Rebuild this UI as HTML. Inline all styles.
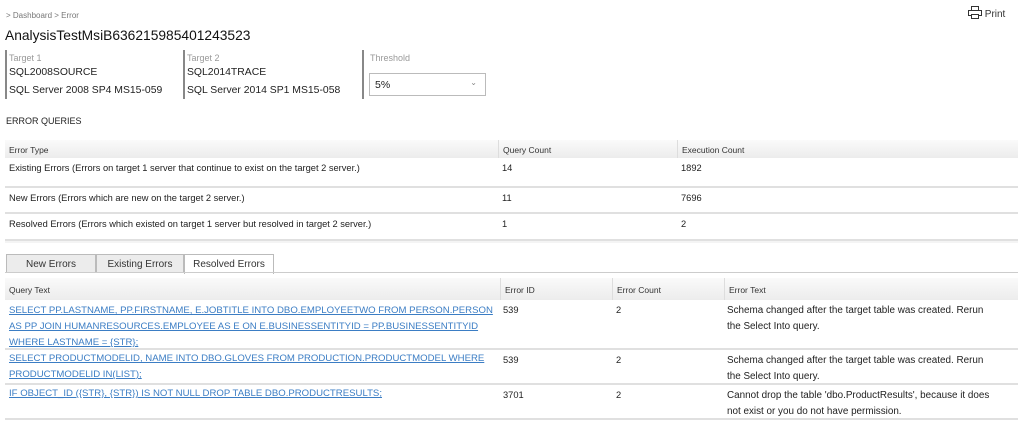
<!DOCTYPE html>
<html><head><meta charset="utf-8"><style>
*{box-sizing:border-box;margin:0;padding:0}
body{width:1024px;height:448px;background:#fff;font-family:"Liberation Sans",sans-serif;color:#222;position:relative;overflow:hidden}
.a{position:absolute;white-space:nowrap}
.crumb{left:6px;top:11px;font-size:8px;color:#777}
.title{left:5px;top:28px;font-size:13.8px;color:#111}
.blk{position:absolute;top:50px;height:49px;border-left:2px solid #888}
.lbl{position:absolute;left:2px;top:3px;font-size:9px;color:#999;white-space:nowrap}
.v{position:absolute;left:2px;font-size:10.4px;color:#222;white-space:nowrap}
.sel{position:absolute;left:5px;top:23px;width:117px;height:23px;border:1px solid #bbb;font-size:10.5px;padding:5px 0 0 5px}
.sec{left:6px;top:116px;font-size:9px;color:#222}
.th{position:absolute;background:linear-gradient(#fafafa,#ececec);font-size:8.5px;color:#333}
.th span{position:absolute;top:0;height:100%;padding:5px 0 0 4px;border-left:1px solid #ddd;white-space:nowrap}
.row{position:absolute;left:5px;width:1013px;border-bottom:2px solid #e0e0e0;font-size:9.3px;color:#222}
.row span{position:absolute;top:5px;white-space:nowrap}
.tab{position:absolute;top:254px;height:19px;border:1px solid #bbb;border-bottom:none;background:#ececec;font-size:10px;text-align:center;padding-top:4px;color:#333}
.lk{color:#3b7dc4;text-decoration:underline;font-size:9.6px;line-height:16px}
.et{font-size:9.9px;line-height:16px}
</style></head><body>
<div class="a crumb">&gt; Dashboard &gt; Error</div>
<div class="a" style="left:968px;top:6px;font-size:10px;color:#333">
<svg width="14" height="13" viewBox="0 0 14 13" style="vertical-align:-2px"><rect x="3.5" y="0.5" width="7" height="4" fill="none" stroke="#333"/><rect x="0.5" y="4.5" width="13" height="5" fill="none" stroke="#333"/><rect x="3.5" y="8.5" width="7" height="4" fill="#fff" stroke="#333"/></svg> Print</div>
<div class="a title">AnalysisTestMsiB636215985401243523</div>
<div class="blk" style="left:5px"><div class="lbl">Target 1</div><div class="v" style="top:17px">SQL2008SOURCE</div><div class="v" style="top:35px">SQL Server 2008 SP4 MS15-059</div></div>
<div class="blk" style="left:183px"><div class="lbl">Target 2</div><div class="v" style="top:17px">SQL2014TRACE</div><div class="v" style="top:35px">SQL Server 2014 SP1 MS15-058</div></div>
<div class="blk" style="left:362px"><div class="lbl" style="left:6px">Threshold</div><div class="sel">5%<span style="position:absolute;right:8px;top:4px;font-size:8px;color:#888">&#8964;</span></div></div>
<div class="a sec">ERROR QUERIES</div>
<div class="th" style="left:5px;top:140px;width:1013px;height:18px"><span style="left:0;border:none">Error Type</span><span style="left:493px">Query Count</span><span style="left:672px">Execution Count</span></div>
<div class="row" style="top:158px;height:30px"><span style="left:4px">Existing Errors (Errors on target 1 server that continue to exist on the target 2 server.)</span><span style="left:497px">14</span><span style="left:676px">1892</span></div>
<div class="row" style="top:188px;height:26px"><span style="left:4px">New Errors (Errors which are new on the target 2 server.)</span><span style="left:497px">11</span><span style="left:676px">7696</span></div>
<div class="row" style="top:214px;height:27px"><span style="left:4px">Resolved Errors (Errors which existed on target 1 server but resolved in target 2 server.)</span><span style="left:497px">1</span><span style="left:676px">2</span></div>
<div style="position:absolute;left:5px;top:241px;width:1013px;height:2px;background:#f4f4f4"></div>
<div class="tab" style="left:6px;width:90px">New Errors</div>
<div class="tab" style="left:96px;width:88px">Existing Errors</div>
<div class="tab" style="left:184px;width:90px;background:#fff;height:20px">Resolved Errors</div>
<div style="position:absolute;left:5px;top:272px;width:1013px;height:1px;background:#ccc"></div>
<div class="th" style="left:5px;top:278px;width:1013px;height:22px"><span style="left:0;border:none;padding-top:7px">Query Text</span><span style="left:495px;padding-top:7px">Error ID</span><span style="left:607px;padding-top:7px">Error Count</span><span style="left:719px;padding-top:7px">Error Text</span></div>
<div class="row" style="top:300px;height:50px"><span class="lk" style="left:4px;top:3px">SELECT PP.LASTNAME, PP.FIRSTNAME, E.JOBTITLE INTO DBO.EMPLOYEETWO FROM PERSON.PERSON<br>AS PP JOIN HUMANRESOURCES.EMPLOYEE AS E ON E.BUSINESSENTITYID = PP.BUSINESSENTITYID<br>WHERE LASTNAME = {STR};</span><span style="left:498px">539</span><span style="left:611px">2</span><span class="et" style="left:722px;top:3px">Schema changed after the target table was created. Rerun<br>the Select Into query.</span></div>
<div class="row" style="top:350px;height:35px"><span class="lk" style="left:4px;top:1px">SELECT PRODUCTMODELID, NAME INTO DBO.GLOVES FROM PRODUCTION.PRODUCTMODEL WHERE<br>PRODUCTMODELID IN(LIST);</span><span style="left:498px">539</span><span style="left:611px">2</span><span class="et" style="left:722px;top:3px">Schema changed after the target table was created. Rerun<br>the Select Into query.</span></div>
<div class="row" style="top:385px;height:35px"><span class="lk" style="left:4px;top:1px">IF OBJECT_ID ({STR}, {STR}) IS NOT NULL DROP TABLE DBO.PRODUCTRESULTS;</span><span style="left:498px">3701</span><span style="left:611px">2</span><span class="et" style="left:722px;top:3px">Cannot drop the table 'dbo.ProductResults', because it does<br>not exist or you do not have permission.</span></div>
</body></html>
